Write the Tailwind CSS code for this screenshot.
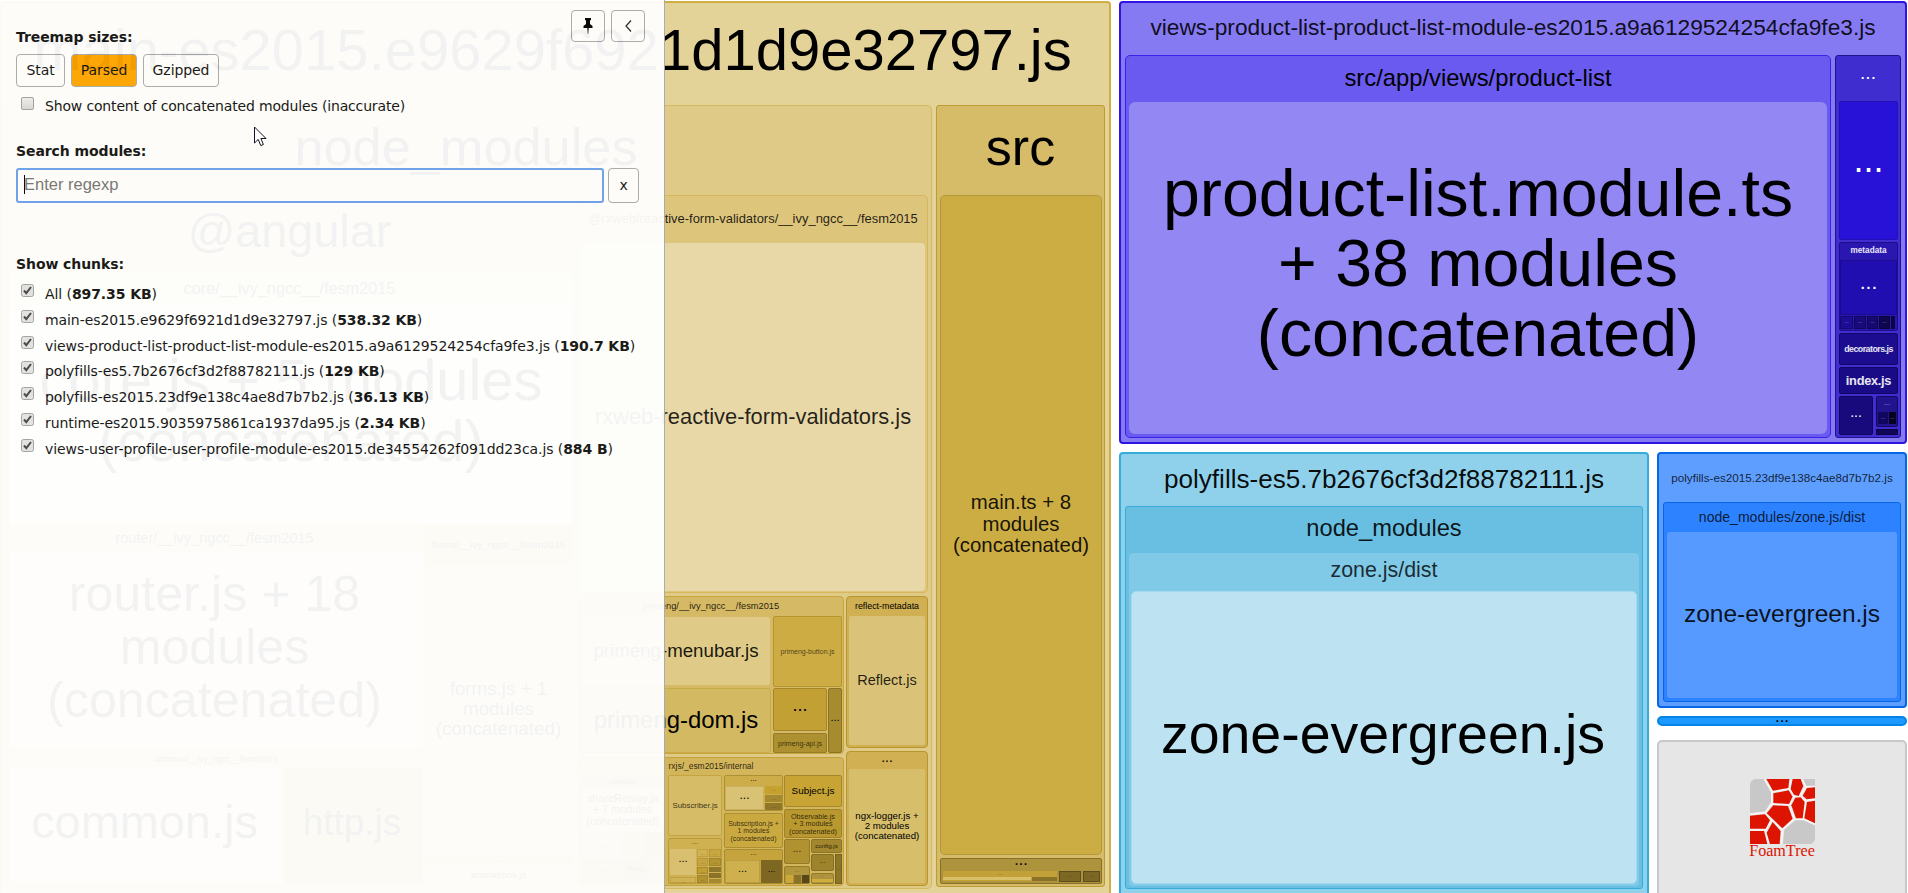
<!DOCTYPE html>
<html lang="en">
<head>
<meta charset="utf-8">
<title>Webpack Bundle Analyzer</title>
<script src="https://cdn.jsdelivr.net/npm/@tailwindcss/browser@4"></script>
</head>
<body class="bg-white overflow-hidden">
<div class="relative w-[1908px] h-[893px] overflow-hidden">

<!-- Treemap: section = tile, header = group label, p = leaf label, i = ellipsis -->
<main class="flex gap-[8px] pt-px h-[893px] overflow-hidden font-['Liberation_Sans',sans-serif] text-black [&_section]:shrink-0 [&_section]:flex [&_section]:flex-col [&_header]:flex [&_header]:items-center [&_header]:justify-center [&_header]:shrink-0 [&_header]:whitespace-nowrap [&_header]:pt-px [&_header]:pb-[.15em] [&_header]:leading-none [&_p]:flex-1 [&_p]:flex [&_p]:items-center [&_p]:justify-center [&_p]:text-center [&_p]:whitespace-nowrap [&_p]:leading-[1.055] [&_p]:pt-[2px] [&_p]:pb-[.15em] [&_i]:block [&_i]:not-italic [&_i]:-translate-y-[.25em]">

  <!-- main -->
  <section class="w-[1111px] h-[896px] border-2 border-[#cfae45] rounded-[4px] bg-[#e4d398]">
    <header class="h-[102px] pr-[6px] text-[58px]">main-es2015.e9629f6921d1d9e32797.js</header>
    <div class="flex gap-[4px] pl-[4px]">
      <section class="w-[926px] h-[784px] border border-[#d6b860] rounded-[5px] bg-[#dfca88]">
        <header class="h-[89px] pr-[6px] text-[52.3px]">node_modules</header>
        <div class="flex gap-[4px] pl-px">

          <section class="w-[566px] h-[691px] border border-[#dcc078] rounded-[4px] bg-[#e3d092]">
            <header class="h-[76px] pr-[3px] text-[46.8px]">@angular</header>
            <section class="w-[564px] h-[252px] bg-[#ebddae] rounded-[4px]">
              <header class="h-[33px] pr-[3px] text-[16.3px]">core/__ivy_ngcc__/fesm2015</header>
              <section class="h-[219px] bg-[#f6efd6] rounded-[4px]"><p class="text-[57.8px]">core.js + 5 modules<br>(concatenated)</p></section>
            </section>
            <div class="flex gap-[2px] pt-[2px]">
              <div class="w-[414px] flex flex-col gap-[3px]">
                <section class="h-[222px] bg-[#e3d29a] rounded-[4px]">
                  <header class="h-[26px] pr-[3px] text-[14.5px]">router/__ivy_ngcc__/fesm2015</header>
                  <section class="h-[196px] pr-[3px] bg-[#f2e8c4] rounded-[4px]"><p class="text-[50.2px]">router.js + 18<br>modules<br>(concatenated)</p></section>
                </section>
                <section class="h-[133px] bg-[#dcc888] rounded-[4px]">
                  <header class="h-[16px] text-[8.3px]">common/__ivy_ngcc__/fesm2015</header>
                  <div class="flex gap-px">
                    <section class="w-[274px] h-[116px] pr-[3px] bg-[#ecdfb4] rounded-[4px]"><p class="text-[46.9px]">common.js</p></section>
                    <section class="w-[139px] h-[116px] pr-[3px] bg-[#ccae4c] rounded-[4px]"><p class="text-[36.9px]">http.js</p></section>
                  </div>
                </section>
              </div>
              <div class="w-[147px] flex flex-col gap-[3px]">
                <section class="h-[327px] bg-[#cfb45c] rounded-[4px]">
                  <header class="h-[39px] text-[9.85px]">forms/__ivy_ngcc__/fesm2015</header>
                  <section class="h-[288px] bg-[#e4d396] rounded-[4px]"><p class="text-[18.8px]">forms.js + 1<br>modules<br>(concatenated)</p></section>
                </section>
                <section class="h-[28px] bg-[#d3b75e] rounded-[3px]">
                  <header class="h-[10px] text-[10px]"><i>...</i></header>
                  <section class="h-[18px] bg-[#e0cc88]"><p class="text-[9.5px]">animations.js</p></section>
                </section>
              </div>
            </div>
          </section>

          <div class="w-[350px] flex flex-col gap-[3px]">
            <section class="h-[398px] border border-[#d6b75e] rounded-[5px] bg-[#ddc57c]">
              <header class="h-[47px] text-[12.95px] text-black/85">@rxweb/reactive-form-validators/__ivy_ngcc__/fesm2015</header>
              <section class="mx-[2px] h-[348px] bg-[#e8d8a8] rounded-[4px]"><p class="text-[21.9px] text-black/85">rxweb-reactive-form-validators.js</p></section>
            </section>
            <div class="flex gap-[2px]">
              <div class="w-[266px] flex flex-col gap-[3px]">
                <section class="h-[158px] border border-[#c9a63c] rounded-[4px] bg-[#d5b964]">
                  <header class="h-[19px] text-[9.3px] text-black/85">primeng/__ivy_ngcc__/fesm2015</header>
                  <div class="flex gap-[2px] pl-[2px]">
                    <div class="w-[190px] flex flex-col gap-[2px]">
                      <section class="h-[70px] bg-[#dfca87] border border-[#d4ba66] rounded-[3px]"><p class="text-[18.7px] text-black/90">primeng-menubar.js</p></section>
                      <section class="h-[65px] bg-[#d4b963] border border-[#c9aa48] rounded-[3px]"><p class="text-[23.9px]">primeng-dom.js</p></section>
                    </div>
                    <div class="flex flex-col gap-px">
                      <section class="w-[69px] h-[71px] bg-[#ccac43] border border-[#b39532] rounded-[2px]"><p class="text-[7px] text-black/65">primeng-button.js</p></section>
                      <div class="flex gap-px">
                        <div class="flex flex-col gap-[2px]">
                          <section class="w-[54px] h-[43px] bg-[#c2a034] border border-[#a5872b] rounded-[2px]"><p class="text-[18px]"><i>...</i></p></section>
                          <section class="w-[54px] h-[20px] bg-[#ad902f] border border-[#957b26] rounded-[2px]"><p class="text-[7px] text-black/70">primeng-api.js</p></section>
                        </div>
                        <section class="w-[14px] h-[65px] bg-[#a78b2f] border border-[#8c7325] rounded-[2px]"><p class="text-[11px]"><i>...</i></p></section>
                      </div>
                    </div>
                  </div>
                </section>

                <section class="h-[129px] border border-[#c5a238] rounded-[4px] bg-[#d3b55b]">
                  <header class="h-[17px] text-[8.45px] text-black/80">rxjs/_esm2015/internal</header>
                  <div class="flex pl-[2px]">
                    <section class="w-[83px] h-[109px] mr-[4px] bg-[#ceb055] border border-[#c09e38] rounded-[3px]">
                      <header class="h-[12px] text-[6.5px]">operators</header>
                      <section class="h-[44px] bg-[#dfcb8a] rounded-[2px]"><p class="text-[10.9px]">shareReplay.js<br>+ 7 modules<br>(concatenated)</p></section>
                      <div class="flex gap-px pt-px">
                        <div class="w-[40px] flex flex-col gap-px">
                          <section class="h-[26px] bg-[#d9c172]"><p class="text-[12px]"><i>...</i></p></section>
                          <section class="h-[22px] bg-[#c4a440]"><p class="text-[11px]"><i>...</i></p></section>
                        </div>
                        <div class="w-[40px] flex flex-col gap-px">
                          <div class="flex gap-px">
                            <section class="w-[20px] h-[26px] bg-[#c3a238]"><p class="text-[9px]"><i>...</i></p></section>
                            <section class="w-[19px] h-[26px] bg-[#bb9a34]"><p class="text-[9px]"><i>...</i></p></section>
                          </div>
                          <section class="w-[27px] h-[18px] bg-[#b49433]"><p class="text-[6px]">filter.js</p></section>
                        </div>
                      </div>
                    </section>

                    <div class="w-[54px] mr-[2px] flex flex-col gap-[2px]">
                      <section class="h-[61px] bg-[#d6bc66] border border-[#c4a440] rounded-[2px]"><p class="text-[7.9px] text-black/75">Subscriber.js</p></section>
                      <section class="h-[46px] bg-[#cfb152] border border-[#bb9c3a] rounded-[2px]">
                        <header class="h-[10px] text-[8px] text-black/60"><i>...</i></header>
                        <div class="flex gap-px pl-px text-black/50 text-[5px]">
                          <div class="w-[26px] flex flex-col gap-[2px]">
                            <section class="h-[26px] bg-[#d9c070] text-black"><p class="text-[11px]"><i>...</i></p></section>
                            <section class="h-[6px] bg-[#d0b355] border border-[#c0a040]"><p><i>...</i></p></section>
                          </div>
                          <div class="w-[11px] flex flex-col gap-px">
                            <section class="h-[8px] bg-[#d0b252] border border-[#c0a040]"><p><i>...</i></p></section>
                            <section class="h-[8px] bg-[#c6a53f] border border-[#b8983a]"><p><i>...</i></p></section>
                            <section class="h-[7px] bg-[#c19f32] border border-[#a88a2e]"><p><i>...</i></p></section>
                            <section class="h-[8px] bg-[#b0922f] border border-[#a08430]"><p><i>...</i></p></section>
                          </div>
                          <div class="w-[12px] flex flex-col gap-px">
                            <section class="h-[8px] bg-[#c8a740] border border-[#b8983a]"><p><i>...</i></p></section>
                            <section class="h-[8px] bg-[#b39433] border border-[#a08430]"><p><i>...</i></p></section>
                            <section class="h-[5px] bg-[#8f772a]"></section>
                            <section class="h-[5px] bg-[#8a7228]"></section>
                            <section class="h-[4px] bg-[#a58930]"></section>
                          </div>
                        </div>
                      </section>
                    </div>

                    <div class="w-[59px] mr-px flex flex-col gap-px">
                      <section class="h-[36px] mb-px bg-[#ccad4a] border border-[#ae9033] rounded-[2px]">
                        <header class="h-[10px] text-[8px]"><i>...</i></header>
                        <div class="flex gap-px">
                          <section class="w-[39px] h-[24px] bg-[#dac274] border border-[#cbb060]"><p class="text-[12px]"><i>...</i></p></section>
                          <div class="w-[17px] flex flex-col gap-px text-[5px] text-black/50">
                            <section class="h-[8px] bg-[#c5a130]"><p><i>...</i></p></section>
                            <section class="h-[7px] bg-[#a58930]"><p><i>...</i></p></section>
                            <section class="h-[7px] bg-[#8f7628]"><p><i>...</i></p></section>
                          </div>
                        </div>
                      </section>
                      <section class="h-[35px] bg-[#caa940] border border-[#ac8f31] rounded-[2px]"><p class="text-[6.9px] text-black/75">Subscription.js +<br>1 modules<br>(concatenated)</p></section>
                      <section class="h-[35px] bg-[#c5a43e] border border-[#a98c30] rounded-[2px]">
                        <header class="h-[10px] text-[8px] text-black/80"><i>...</i></header>
                        <div class="flex gap-px">
                          <section class="w-[35px] h-[23px] bg-[#cfb04f] border border-[#bc9e40]"><p class="text-[11px]"><i>...</i></p></section>
                          <section class="w-[21px] h-[23px] bg-[#7d6723]"><p class="text-[9px]"><i>...</i></p></section>
                        </div>
                      </section>
                    </div>

                    <div class="w-[58px] flex flex-col">
                      <section class="h-[32px] mb-[2px] bg-[#c7a434] border border-[#a5882d] rounded-[2px]"><p class="text-[9.9px]">Subject.js</p></section>
                      <section class="h-[29px] mb-px bg-[#b8982f] border border-[#a08329] rounded-[2px]"><p class="text-[7.2px] text-black/75">Observable.js<br>+ 3 modules<br>(concatenated)</p></section>
                      <div class="flex gap-px">
                        <div class="w-[26px] flex flex-col gap-[2px]">
                          <section class="h-[25px] bg-[#b09230] border border-[#957b28] rounded-[2px]"><p class="text-[10px] text-black/80"><i>...</i></p></section>
                          <section class="h-[18px] bg-[#b2963d] border border-[#957b28] rounded-[2px]">
                            <header class="h-[8px] text-[6px] text-black/50"><i>...</i></header>
                            <div class="flex gap-px pl-px"><section class="w-[7px] h-[8px] bg-[#cba838]"></section><section class="w-[7px] h-[8px] bg-[#8a7128]"></section><section class="w-[7px] h-[8px] bg-[#574716]"></section></div>
                          </section>
                        </div>
                        <div class="w-[31px] flex flex-col gap-px">
                          <section class="h-[14px] bg-[#a2872e] border border-[#8a7227] rounded-[2px]"><p class="text-[6.2px] text-black/80">config.js</p></section>
                          <div class="flex gap-px">
                            <div class="w-[23px] flex flex-col gap-[2px]">
                              <section class="h-[17px] bg-[#9e832d] border border-[#846d25] rounded-[2px]"><p class="text-[7px] text-black/80"><i>...</i></p></section>
                              <section class="h-[11px] bg-[#af933c] border border-[#937a2a] rounded-[2px]">
                                <header class="h-[5px] text-[4px] text-black/40"><i>...</i></header>
                                <section class="h-[3px] bg-[#cfae40]"></section>
                              </section>
                            </div>
                            <section class="w-[7px] h-[30px] bg-[#8d7528] border border-[#776120]"><p class="text-[5px] text-black/60"><i>...</i></p></section>
                          </div>
                        </div>
                      </div>
                    </div>
                  </div>
                </section>
              </div>

              <div class="w-[82px] flex flex-col gap-[3px]">
                <section class="h-[152px] border border-[#b8962e] rounded-[4px] bg-[#d0b052]">
                  <header class="h-[19px] text-[8.9px]">reflect-metadata</header>
                  <section class="mx-[2px] h-[129px] bg-[#dac379] rounded-[2px]"><p class="text-[14.5px] text-black/85">Reflect.js</p></section>
                </section>
                <section class="h-[135px] border border-[#b8962e] rounded-[4px] bg-[#d0b052]">
                  <header class="h-[17px] text-[14px]"><i>...</i></header>
                  <section class="mx-[2px] h-[114px] bg-[#d7be6b] rounded-[2px]"><p class="text-[9.7px]">ngx-logger.js +<br>2 modules<br>(concatenated)</p></section>
                </section>
              </div>
            </div>
          </div>
        </div>
      </section>

      <!-- src -->
      <section class="w-[169px] h-[782px] border border-[#bd9c35] rounded-[3px] bg-[#d6bc69]">
        <header class="h-[89px] text-[52px]">src</header>
        <div class="flex flex-col gap-[3px] pl-[3px]">
          <section class="w-[162px] h-[660px] bg-[#ccad44] border border-[#b4973a] rounded-[5px]"><p class="text-[20.4px] text-black/90">main.ts + 8<br>modules<br>(concatenated)</p></section>
          <section class="w-[162px] h-[26px] bg-[#ae933d] border border-[#87702a] rounded-[2px]">
            <header class="h-[12px] text-[16px]"><i>...</i></header>
            <div class="flex gap-[2px] pl-[2px] text-black/50 text-[5px]">
              <section class="w-[114px] h-[10px] bg-[#c2a139]">
                <header class="h-[6px] text-[6px]"><i>...</i></header>
                <div class="flex gap-px"><section class="w-[88px] h-[3px] bg-[#d9bf6a]"></section><section class="w-[25px] h-[4px] bg-[#8a7229]"></section></div>
              </section>
              <section class="w-[22px] h-[11px] bg-[#7d6725] border border-[#5f4e1a]"><p><i>...</i></p></section>
              <section class="w-[17px] h-[11px] bg-[#7d6725] border border-[#5f4e1a]"><p><i>...</i></p></section>
            </div>
          </section>
        </div>
      </section>
    </div>
  </section>

  <div class="w-[788px] shrink-0 flex flex-col gap-[8px]">
    <!-- views-product-list -->
    <section class="h-[443px] border-2 border-[#2d14e3] rounded-[4px] bg-[#867af3]">
      <header class="h-[52px] text-[22.7px] text-black/90">views-product-list-product-list-module-es2015.a9a6129524254cfa9fe3.js</header>
      <div class="flex gap-[4px] pl-[4px]">
        <section class="w-[706px] h-[383px] border border-[#3a22ea] rounded-[5px] bg-[#6a5af0]">
          <header class="h-[46px] text-[23.8px]">src/app/views/product-list</header>
          <section class="mx-[3px] h-[332px] bg-[#9387f4] rounded-[6px]"><p class="text-[66.3px]">product-list.module.ts<br>+ 38 modules<br>(concatenated)</p></section>
        </section>
        <section class="w-[66px] h-[383px] border border-[#24118f] rounded-[3px] bg-[#402dcf] text-white">
          <header class="h-[45px] text-[19px]"><i>...</i></header>
          <div class="w-[59px] ml-[3px] flex flex-col gap-[2px]">
            <section class="h-[139px] bg-[#2812d8] border border-[#2310b5] rounded-[2px]"><p class="text-[36px]"><i>...</i></p></section>
            <section class="h-[89px] bg-[#2a17b0] border border-[#1d0d88] rounded-[2px]">
              <header class="h-[17px] text-[8.2px] font-bold text-white/90">metadata</header>
              <section class="h-[55px] bg-[#210eb0] border border-[#1b0b90]"><p class="text-[21px]"><i>...</i></p></section>
              <div class="flex gap-px pt-px text-[5px] text-white/60">
                <section class="w-[13px] h-[13px] bg-[#1d0d95] border border-[#150870]"><p><i>...</i></p></section>
                <section class="w-[12px] h-[13px] bg-[#180a7a] border border-[#11065c]"><p><i>...</i></p></section>
                <section class="w-[11px] h-[13px] bg-[#160970] border border-[#100655]"><p><i>...</i></p></section>
                <section class="w-[11px] h-[13px] bg-[#0f0650] border border-[#0b043c]"><p><i>...</i></p></section>
                <section class="w-[4px] h-[13px] bg-[#0c0440]"></section>
              </div>
            </section>
            <section class="h-[32px] bg-[#1b0c90] border border-[#130868] rounded-[2px]"><p class="text-[8.8px] font-bold tracking-[-0.5px] text-white/90">decorators.js</p></section>
            <section class="h-[27px] bg-[#190a85] border border-[#120760] rounded-[2px]"><p class="text-[12.8px] font-bold tracking-[-0.3px] text-white/90">index.js</p></section>
            <div class="flex gap-[3px]">
              <section class="w-[34px] h-[39px] bg-[#180a7c] border border-[#11075a] rounded-[2px]"><p class="text-[14px]"><i>...</i></p></section>
              <div class="w-[22px] flex flex-col gap-[2px]">
                <section class="h-[31px] bg-[#22138f] border border-[#140862] rounded-[2px]">
                  <header class="h-[15px] text-[7px] text-white/60"><i>...</i></header>
                  <div class="flex gap-px pl-px text-[5px] text-white/60">
                    <section class="w-[10px] h-[12px] bg-[#120760]"><p><i>...</i></p></section>
                    <section class="w-[7px] h-[12px] bg-[#070220]"><p><i>...</i></p></section>
                  </div>
                </section>
                <section class="h-[6px] bg-[#120758] border border-[#0d0440]"></section>
              </div>
            </div>
          </div>
        </section>
      </div>
    </section>

    <div class="flex gap-[8px]">
      <!-- polyfills-es5 -->
      <section class="w-[530px] h-[445px] border-2 border-[#36acdb] rounded-[4px] bg-[#8fd0ea]">
        <header class="h-[52px] text-[26.1px] text-black/95">polyfills-es5.7b2676cf3d2f88782111.js</header>
        <section class="mx-[4px] h-[383px] border border-[#36acdb] rounded-[3px] bg-[#68bfe2]">
          <header class="h-[46px] text-[23.7px] text-black/90">node_modules</header>
          <section class="mx-[3px] h-[333px] bg-[#80c9e7] rounded-[4px]">
            <header class="h-[38px] text-[21.4px] text-black/80">zone.js/dist</header>
            <section class="mx-[2px] h-[293px] bg-[#bde3f2] rounded-[5px] border border-[#a5d9ee]"><p class="pr-[2px] text-[55.5px]">zone-evergreen.js</p></section>
          </section>
        </section>
      </section>

      <div class="w-[250px] flex flex-col">
        <!-- polyfills-es2015 -->
        <section class="h-[256px] border-2 border-[#0566e8] rounded-[4px] bg-[#5e9eff]">
          <header class="h-[48px] text-[11.7px] text-black/80">polyfills-es2015.23df9e138c4ae8d7b7b2.js</header>
          <section class="mx-[4px] h-[200px] border border-[#0566e8] rounded-[3px] bg-[#2d83ff]">
            <header class="h-[29px] text-[14.05px] text-black/80">node_modules/zone.js/dist</header>
            <section class="mx-[3px] h-[166px] bg-[#569aff] rounded-[3px]"><p class="text-[24.5px] text-black/90">zone-evergreen.js</p></section>
          </section>
        </section>
        <!-- runtime -->
        <section class="mt-[8px] h-[10px] border-2 border-[#0584e8] rounded-[5px] bg-[#1c98ff]"><header class="h-[6px] text-[17px]"><i>...</i></header></section>
        <!-- attribution -->
        <section class="mt-[14px] h-[160px] border-2 border-[#c8c8c8] rounded-[5px] bg-[#e6e6e6]">
          <div class="mt-[37px] flex flex-col items-center">
            <svg class="w-[65px] h-[65px]" viewBox="0 0 195 195">
              <g fill="#c8c8c8"><path d="M14 0H40L63 38V71L50 96L44 99L0 103V14Q4 3 14 0Z"/><path d="M158 0H195V20H165Z"/><path d="M103 152L137 124H165L195 139V182Q190 193 180 195H99Z"/></g>
              <g fill="none" stroke="#f4f4f4" stroke-width="6"><path d="M44 0L66 38V71L47 100L0 106M66 37L118 30L123 0M118 30L130 52L118 78L67 75M130 52L147 54L167 24L156 0M167 24H195M147 54L166 64L195 61M166 64L160 120L195 136M118 78L132 120L97 152L47 102M160 120H134M97 152L94 195M0 152H47L64 124M47 152L56 195"/></g>
              <g fill="#dd1400"><path d="M49 0H118L115 27L69 35Z"/><path d="M128 0H152L160 21L146 51L132 47L122 30Z"/><path d="M171 27L195 25V58L170 61L158 50Z"/><path d="M70 43L116 34L128 53L117 75L70 72Z"/><path d="M136 56L152 55L164 69L158 118H138L124 79Z"/><path d="M171 69L195 65V133L163 118Z"/><path d="M50 103L70 79L114 81L128 119L97 148Z"/><path d="M0 110L45 106L60 124L47 149H0Z"/><path d="M68 129L92 156L89 195H60L50 161Z"/><path d="M0 156H42L52 195H0Z"/></g>
            </svg>
            <div class="font-['Liberation_Serif',serif] text-[16.1px] leading-[14px] text-[#dd1400]">FoamTree</div>
          </div>
        </section>
      </div>
    </div>
  </div>
</main>

<!-- Sidebar -->
<aside class="absolute left-0 top-0 w-[665px] h-[893px] bg-white opacity-95 border-r border-[#aaa] font-['DejaVu_Sans',sans-serif] text-[14px] tracking-[-0.08px] text-[#111]">
  <div class="absolute top-[10px] right-[19px] flex gap-[6px]">
    <button class="w-[34px] h-[32px] border border-[#aaa] rounded-[4px] flex items-center justify-center">
      <svg class="w-[10px] h-[17px]" viewBox="0 0 10 17"><path d="M2 0H8V2L7 2.5V6L9.5 8V10H.5V8L3 6V2.5L2 2Z"/><path d="M4.3 10H5.7L5.2 16H4.8Z"/></svg>
    </button>
    <button class="w-[34px] h-[32px] border border-[#aaa] rounded-[4px] flex items-center justify-center">
      <svg class="w-[7px] h-[12px]" viewBox="0 0 7 12" fill="none" stroke="#222" stroke-width="1.2"><path d="M6 .5L1 6L6 11.5"/></svg>
    </button>
  </div>

  <div class="pl-[16px]">
    <div class="pt-[28px] h-[54px] leading-[18px] font-bold">Treemap sizes:</div>
    <div class="flex gap-[6px] h-[33px]">
      <button class="w-[49px] border border-[#aaa] rounded-[4px]">Stat</button>
      <button class="w-[66px] border border-[#aaa] rounded-[4px] bg-[#ffa500]">Parsed</button>
      <button class="w-[76px] border border-[#aaa] rounded-[4px]">Gzipped</button>
    </div>
    <label class="flex h-[37px] pl-[5px] pt-[10px]">
      <span class="w-[13px] h-[13px] border border-[#a0a0a0] rounded-[2px] bg-linear-to-b from-[#efefef] to-[#d8d8d8]"></span>
      <span class="pl-[11px] leading-[18px] tracking-[-0.16px]">Show content of concatenated modules (inaccurate)</span>
    </label>
    <div class="pt-[18px] h-[44px] leading-[18px] font-bold">Search modules:</div>
    <div class="flex gap-[4px]">
      <div class="w-[588px] h-[35px] border-2 border-[#6ba0ee] rounded-[3px] flex items-center pl-[6px] pb-[2px]">
        <span class="w-px h-[19px] bg-black"></span>
        <span class="font-['Liberation_Sans',sans-serif] text-[16.5px] tracking-normal text-[#757575] -ml-px">Enter regexp</span>
      </div>
      <button class="w-[31px] h-[35px] border border-[#aaa] rounded-[4px]">x</button>
    </div>
    <div class="pt-[52px] h-[79px] leading-[18px] font-bold">Show chunks:</div>
    <div class="flex flex-col">
      <label class="flex h-[25.8px] pl-[5px]"><svg class="w-[13px] h-[13px] mt-[2px]" viewBox="0 0 13 13"><rect x=".5" y=".5" width="12" height="12" rx="2" fill="#e2e2e2" stroke="#a0a0a0"/><path d="M3 6.5L5.3 9.2L10 3" fill="none" stroke="#444" stroke-width="2"/></svg><span class="pl-[11px] pt-[3px] leading-[18px] whitespace-nowrap">All (<b>897.35 KB</b>)</span></label>
      <label class="flex h-[25.8px] pl-[5px]"><svg class="w-[13px] h-[13px] mt-[2px]" viewBox="0 0 13 13"><rect x=".5" y=".5" width="12" height="12" rx="2" fill="#e2e2e2" stroke="#a0a0a0"/><path d="M3 6.5L5.3 9.2L10 3" fill="none" stroke="#444" stroke-width="2"/></svg><span class="pl-[11px] pt-[3px] leading-[18px] whitespace-nowrap">main-es2015.e9629f6921d1d9e32797.js (<b>538.32 KB</b>)</span></label>
      <label class="flex h-[25.8px] pl-[5px]"><svg class="w-[13px] h-[13px] mt-[2px]" viewBox="0 0 13 13"><rect x=".5" y=".5" width="12" height="12" rx="2" fill="#e2e2e2" stroke="#a0a0a0"/><path d="M3 6.5L5.3 9.2L10 3" fill="none" stroke="#444" stroke-width="2"/></svg><span class="pl-[11px] pt-[3px] leading-[18px] whitespace-nowrap">views-product-list-product-list-module-es2015.a9a6129524254cfa9fe3.js (<b>190.7 KB</b>)</span></label>
      <label class="flex h-[25.8px] pl-[5px]"><svg class="w-[13px] h-[13px] mt-[2px]" viewBox="0 0 13 13"><rect x=".5" y=".5" width="12" height="12" rx="2" fill="#e2e2e2" stroke="#a0a0a0"/><path d="M3 6.5L5.3 9.2L10 3" fill="none" stroke="#444" stroke-width="2"/></svg><span class="pl-[11px] pt-[3px] leading-[18px] whitespace-nowrap">polyfills-es5.7b2676cf3d2f88782111.js (<b>129 KB</b>)</span></label>
      <label class="flex h-[25.8px] pl-[5px]"><svg class="w-[13px] h-[13px] mt-[2px]" viewBox="0 0 13 13"><rect x=".5" y=".5" width="12" height="12" rx="2" fill="#e2e2e2" stroke="#a0a0a0"/><path d="M3 6.5L5.3 9.2L10 3" fill="none" stroke="#444" stroke-width="2"/></svg><span class="pl-[11px] pt-[3px] leading-[18px] whitespace-nowrap">polyfills-es2015.23df9e138c4ae8d7b7b2.js (<b>36.13 KB</b>)</span></label>
      <label class="flex h-[25.8px] pl-[5px]"><svg class="w-[13px] h-[13px] mt-[2px]" viewBox="0 0 13 13"><rect x=".5" y=".5" width="12" height="12" rx="2" fill="#e2e2e2" stroke="#a0a0a0"/><path d="M3 6.5L5.3 9.2L10 3" fill="none" stroke="#444" stroke-width="2"/></svg><span class="pl-[11px] pt-[3px] leading-[18px] whitespace-nowrap">runtime-es2015.9035975861ca1937da95.js (<b>2.34 KB</b>)</span></label>
      <label class="flex h-[25.8px] pl-[5px]"><svg class="w-[13px] h-[13px] mt-[2px]" viewBox="0 0 13 13"><rect x=".5" y=".5" width="12" height="12" rx="2" fill="#e2e2e2" stroke="#a0a0a0"/><path d="M3 6.5L5.3 9.2L10 3" fill="none" stroke="#444" stroke-width="2"/></svg><span class="pl-[11px] pt-[3px] leading-[18px] whitespace-nowrap">views-user-profile-user-profile-module-es2015.de34554262f091dd23ca.js (<b>884 B</b>)</span></label>
    </div>
  </div>
</aside>

<!-- Mouse pointer -->
<svg class="absolute left-[254px] top-[126px] w-[13px] h-[21px]" viewBox="0 0 13 21"><path d="M.5 1V17L4.2 13.4L6.8 19.6L9.4 18.5L6.9 12.5H12Z" fill="#fff" stroke="#112" stroke-width="1"/></svg>
</div>
</body>
</html>
